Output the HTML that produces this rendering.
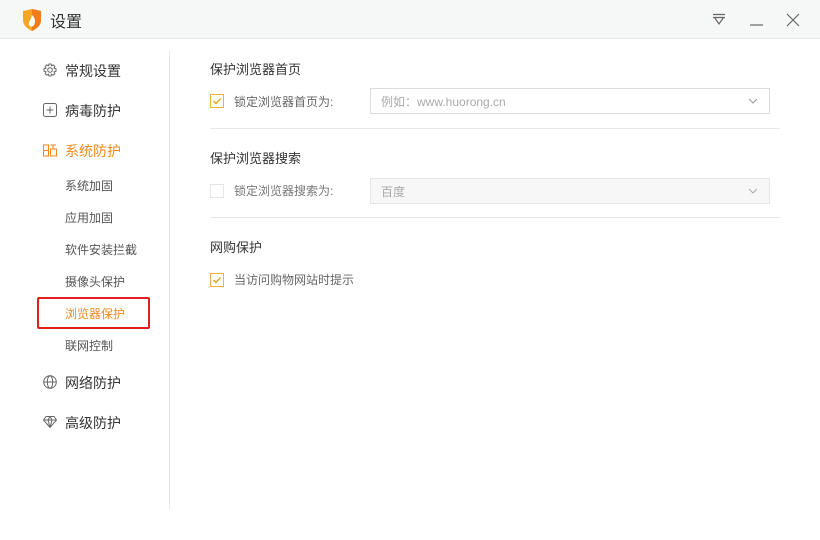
<!DOCTYPE html>
<html><head><meta charset="utf-8"><style>
*{margin:0;padding:0;box-sizing:border-box}
body{width:820px;height:540px;background:#fff;font-family:"Liberation Sans","Noto Sans CJK SC",sans-serif;color:#333;position:relative;overflow:hidden}
.a{position:absolute;white-space:nowrap}
.tb{position:absolute;left:0;top:0;width:820px;height:39px;background:#f6f7f7;border-bottom:1px solid #e8e8e8}
.nav{font-size:14px;color:#333}
.sub{font-size:12px;color:#555}
.h{font-size:13px;color:#333}
.lbl{font-size:12px;color:#666}
.cb{position:absolute;width:14px;height:14px;border:1px solid #ddd;background:#fff}
.cb.on{border-color:#f0b040}
.sel{position:absolute;left:370px;width:400px;height:26px;border:1px solid #ddd;font-size:12px;color:#aaa;padding:4px 0 0 10px}
.sel.dis{background:#f7f7f7;border-color:#e6e6e6}
.hr{position:absolute;left:210px;width:570px;height:1px;background:#e8e8e8}
</style></head><body>
<div class="tb"></div>
<svg class="a" style="left:22px;top:9px" width="20" height="22" viewBox="0 0 20 22"><path d="M1 2 L10 0 L19 2 L19 11 C19 17 14 20 10 22 C6 20 1 17 1 11Z" fill="#f5a623"/><path d="M10 0 L19 2 L19 11 C19 17 14 20 10 22Z" fill="#ef7d1a"/><path d="M10 6 C13 9 14 12 12 16 C11 18 8 18 7 16 C6 13 9 11 10 6Z" fill="#fff"/></svg>
<div class="a" style="left:50px;top:8px;font-size:16px;color:#333">设置</div>
<svg class="a" style="left:712px;top:13px" width="14" height="14" viewBox="0 0 14 14" fill="none" stroke="#666" stroke-width="1.2"><path d="M1 1.5H13M1 4.5H13M2.5 4.5L7 11L11.5 4.5"/></svg>
<svg class="a" style="left:750px;top:14px" width="14" height="14" viewBox="0 0 14 14" stroke="#666" stroke-width="1.2"><path d="M0 11H13"/></svg>
<svg class="a" style="left:786px;top:13px" width="14" height="14" viewBox="0 0 14 14" stroke="#666" stroke-width="1.2"><path d="M1 1L13 13M13 1L1 13"/></svg>

<div class="a" style="left:169px;top:50px;width:1px;height:460px;background:#e8e8e8"></div>

<svg class="a" style="left:43px;top:63px" width="14" height="14" viewBox="0 0 14 14" fill="none" stroke="#666" stroke-width="1"><circle cx="7" cy="7" r="2.3"/><path d="M6 1H8L8.5 2.8L10.2 1.9L11.9 3.4L11 5.2L13 5.8V8.2L11 8.8L11.9 10.6L10.2 12.1L8.5 11.2L8 13H6L5.5 11.2L3.8 12.1L2.1 10.6L3 8.8L1 8.2V5.8L3 5.2L2.1 3.4L3.8 1.9L5.5 2.8Z"/></svg>
<div class="a nav" style="left:65px;top:61px">常规设置</div>
<svg class="a" style="left:43px;top:103px" width="14" height="14" viewBox="0 0 14 14" fill="none" stroke="#666" stroke-width="1"><rect x="0.5" y="0.5" width="13" height="13" rx="2"/><path d="M7 3.5V10.5M3.5 7H10.5"/></svg>
<div class="a nav" style="left:65px;top:101px">病毒防护</div>
<svg class="a" style="left:43px;top:144px" width="14" height="13" viewBox="0 0 14 13" fill="none" stroke="#ef8a1e" stroke-width="1.1"><rect x="0.5" y="1" width="5" height="11"/><path d="M0.5 6.5H5.5M7.5 1H13M10 1V5M7.5 5H13.5V12H7.5Z"/></svg>
<div class="a nav" style="left:65px;top:141px;color:#ef8a1e">系统防护</div>
<div class="a sub" style="left:65px;top:177px">系统加固</div>
<div class="a sub" style="left:65px;top:209px">应用加固</div>
<div class="a sub" style="left:65px;top:241px">软件安装拦截</div>
<div class="a sub" style="left:65px;top:273px">摄像头保护</div>
<div class="a" style="left:37px;top:297px;width:113px;height:32px;border:2px solid #e02020;border-radius:2px"></div>
<div class="a sub" style="left:65px;top:305px;color:#ef8a1e">浏览器保护</div>
<div class="a sub" style="left:65px;top:337px">联网控制</div>
<svg class="a" style="left:43px;top:375px" width="14" height="14" viewBox="0 0 14 14" fill="none" stroke="#666" stroke-width="1"><circle cx="7" cy="7" r="6.3"/><ellipse cx="7" cy="7" rx="2.7" ry="6.3"/><path d="M0.7 7H13.3"/></svg>
<div class="a nav" style="left:65px;top:373px">网络防护</div>
<svg class="a" style="left:43px;top:416px" width="14" height="12" viewBox="0 0 14 12" fill="none" stroke="#666" stroke-width="1"><path d="M3 0.5H11L13.5 4L7 11.5L0.5 4Z M0.5 4H13.5 M5 4L7 11.5L9 4 M5 4L7 0.5L9 4"/></svg>
<div class="a nav" style="left:65px;top:413px">高级防护</div>

<div class="a h" style="left:210px;top:59px">保护浏览器首页</div>
<div class="cb on" style="left:210px;top:94px"></div>
<svg class="a" style="left:211px;top:95px" width="12" height="12" viewBox="0 0 12 12" fill="none" stroke="#f0a020" stroke-width="1.4"><path d="M2.5 6L5 8.5L9.5 3.5"/></svg>
<div class="a lbl" style="left:234px;top:93px">锁定浏览器首页为:</div>
<div class="sel" style="top:88px">例如：www.huorong.cn</div>
<svg class="a" style="left:747px;top:97px" width="12" height="8" viewBox="0 0 12 8" fill="none" stroke="#999" stroke-width="1"><path d="M2 2L6 6L10 2"/></svg>
<div class="hr" style="top:128px"></div>

<div class="a h" style="left:210px;top:148px">保护浏览器搜索</div>
<div class="cb" style="left:210px;top:184px;border-color:#e4e4e4"></div>
<div class="a lbl" style="left:234px;top:182px;color:#777">锁定浏览器搜索为:</div>
<div class="sel dis" style="top:178px">百度</div>
<svg class="a" style="left:747px;top:187px" width="12" height="8" viewBox="0 0 12 8" fill="none" stroke="#aaa" stroke-width="1"><path d="M2 2L6 6L10 2"/></svg>
<div class="hr" style="top:217px"></div>

<div class="a h" style="left:210px;top:237px">网购保护</div>
<div class="cb on" style="left:210px;top:273px"></div>
<svg class="a" style="left:211px;top:274px" width="12" height="12" viewBox="0 0 12 12" fill="none" stroke="#f0a020" stroke-width="1.4"><path d="M2.5 6L5 8.5L9.5 3.5"/></svg>
<div class="a lbl" style="left:234px;top:271px">当访问购物网站时提示</div>
</body></html>
